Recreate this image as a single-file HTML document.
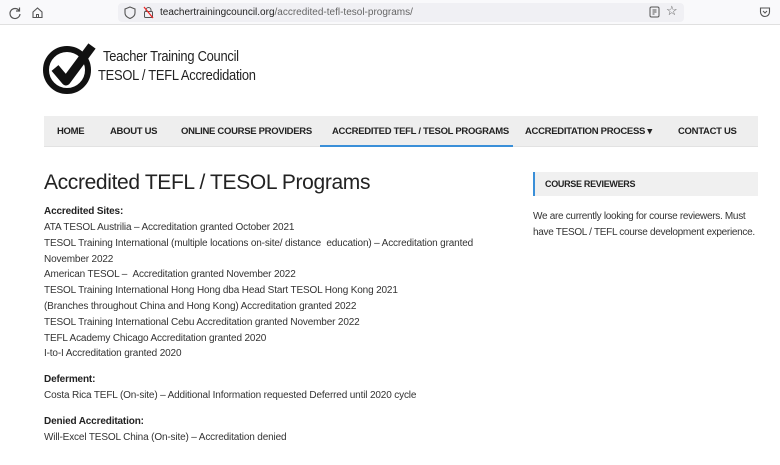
<!DOCTYPE html>
<html><head><meta charset="utf-8"><style>
*{margin:0;padding:0;box-sizing:border-box}
body{width:780px;height:465px;overflow:hidden;background:#fff;font-family:"Liberation Sans",sans-serif;color:#222;position:relative}
.abs{position:absolute;white-space:nowrap}
.bar{position:absolute;left:0;top:0;width:780px;height:25px;background:#f9f9fb;border-bottom:1px solid #e0e0e0}
.url{position:absolute;left:118px;top:3px;width:566px;height:19px;background:#f0f0f4;border-radius:4px}
.nav{position:absolute;left:44px;top:116px;width:714px;height:31px;background:#eeeeee;border-bottom:1px solid #e2e2e2}
.nav span{position:absolute;top:10px;font-size:9.5px;font-weight:bold;letter-spacing:-0.3px;color:#222}
.t{font-size:10px;letter-spacing:-0.15px;color:#333;left:44px}
.b{font-weight:bold;color:#222}
.lg{font-size:15px;letter-spacing:-0.3px;color:#222;transform:scaleX(0.86);transform-origin:0 0}
</style></head><body>
<div class="bar"></div>
<div class="url"></div>
<svg class="abs" style="left:8px;top:6px" width="14" height="14" viewBox="0 0 14 14"><path d="M11 4.5A5 5 0 1 0 12 8" fill="none" stroke="#555" stroke-width="1.2"/><path d="M11.5 1.5v3.5H8" fill="none" stroke="#555" stroke-width="1.2"/></svg>
<svg class="abs" style="left:31px;top:6px" width="13" height="13" viewBox="0 0 13 13"><path d="M2 6L6.5 2 11 6v5.5H2z" fill="none" stroke="#555" stroke-width="1.1"/><path d="M5.5 11.5v-3h2v3" fill="none" stroke="#555"/></svg>
<svg class="abs" style="left:124px;top:6px" width="12" height="13" viewBox="0 0 12 13"><path d="M6 1L11 3v4c0 3-2.5 4.5-5 5.5C3.5 11.5 1 10 1 7V3z" fill="none" stroke="#555" stroke-width="1.1"/></svg>
<svg class="abs" style="left:143px;top:6px" width="11" height="13" viewBox="0 0 11 13"><rect x="1.5" y="5.5" width="8" height="6" rx="1" fill="none" stroke="#555"/><path d="M3 5.5V4a2.5 2.5 0 0 1 5 0v1.5" fill="none" stroke="#555"/><path d="M1 1l9 11" stroke="#e22" stroke-width="1.2"/></svg>
<div class="abs" style="left:160px;top:7px;font-size:10px;color:#222">teachertrainingcouncil.org<span style="color:#666">/accredited-tefl-tesol-programs/</span></div>
<svg class="abs" style="left:649px;top:6px" width="11" height="12" viewBox="0 0 11 12"><rect x="1" y="1" width="9" height="10" rx="1.5" fill="none" stroke="#555"/><path d="M3.5 4h4M3.5 6h4M3.5 8h2" stroke="#555"/></svg>
<div class="abs" style="left:666px;top:3px;font-size:13px;color:#555">☆</div>
<svg class="abs" style="left:759px;top:6px" width="12" height="12" viewBox="0 0 12 12"><path d="M1.5 2h9v4a4.5 4.5 0 0 1-9 0z" fill="none" stroke="#555" stroke-width="1.1"/><path d="M4 5l2 2 2-2" fill="none" stroke="#555"/></svg>

<svg class="abs" style="left:42px;top:40px" width="55" height="56" viewBox="0 0 55 56"><circle cx="25" cy="30" r="21" fill="none" stroke="#111" stroke-width="6"/><path d="M13 28l11 13L50 6" fill="none" stroke="#111" stroke-width="9" stroke-linejoin="round"/></svg>
<div class="abs lg" style="left:103px;top:48px">Teacher Training Council</div>
<div class="abs lg" style="left:98px;top:67px">TESOL / TEFL Accredidation</div>

<div class="nav">
<span style="left:13px">HOME</span>
<span style="left:66px">ABOUT US</span>
<span style="left:137px">ONLINE COURSE PROVIDERS</span>
<span style="left:288px">ACCREDITED TEFL / TESOL PROGRAMS</span>
<span style="left:481px">ACCREDITATION PROCESS ▾</span>
<span style="left:634px">CONTACT US</span>
<div style="position:absolute;left:276px;top:29px;width:193px;height:2px;background:#3a8fd8"></div>
</div>

<div class="abs" style="left:44px;top:171px;font-size:21px;letter-spacing:-0.35px;color:#222">Accredited TEFL / TESOL Programs</div>
<div class="abs t b" style="top:206px">Accredited Sites:</div>
<div class="abs t" style="top:222px">ATA TESOL Austrilia – Accreditation granted October 2021</div>
<div class="abs t" style="top:238px">TESOL Training International (multiple locations on-site/ distance &nbsp;education) – Accreditation granted</div>
<div class="abs t" style="top:254px">November 2022</div>
<div class="abs t" style="top:269px">American TESOL – &nbsp;Accreditation granted November 2022</div>
<div class="abs t" style="top:285px">TESOL Training International Hong Hong dba Head Start TESOL Hong Kong 2021</div>
<div class="abs t" style="top:301px">(Branches throughout China and Hong Kong) Accreditation granted 2022</div>
<div class="abs t" style="top:317px">TESOL Training International Cebu Accreditation granted November 2022</div>
<div class="abs t" style="top:333px">TEFL Academy Chicago Accreditation granted 2020</div>
<div class="abs t" style="top:348px">I-to-I Accreditation granted 2020</div>
<div class="abs t b" style="top:374px">Deferment:</div>
<div class="abs t" style="top:390px">Costa Rica TEFL (On-site) – Additional Information requested Deferred until 2020 cycle</div>
<div class="abs t b" style="top:416px">Denied Accreditation:</div>
<div class="abs t" style="top:432px">Will-Excel TESOL China (On-site) – Accreditation denied</div>

<div class="abs" style="left:533px;top:172px;width:225px;height:24px;background:#f0f0f0;border-left:2px solid #3a8fd8"></div>
<div class="abs" style="left:545px;top:179px;font-size:9px;font-weight:bold;letter-spacing:-0.3px;color:#222">COURSE REVIEWERS</div>
<div class="abs" style="left:533px;top:211px;font-size:10px;letter-spacing:-0.3px;color:#333">We are currently looking for course reviewers. Must</div>
<div class="abs" style="left:533px;top:227px;font-size:10px;letter-spacing:-0.3px;color:#333">have TESOL / TEFL course development experience.</div>
</body></html>
